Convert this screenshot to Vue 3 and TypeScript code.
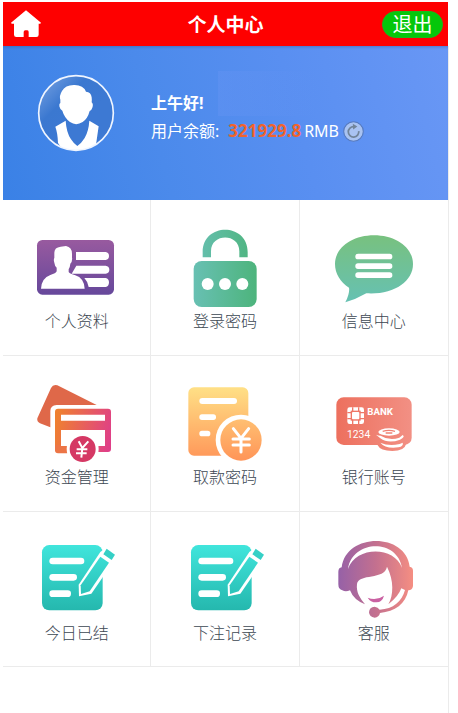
<script setup lang="ts">
import { ref } from 'vue'

interface MenuItem {
  icon: string
  label: string
  viewBox: string
}

const balance = ref<string>('321929.8')

const items: MenuItem[] = [
  { icon: 'profile', label: '个人资料', viewBox: '51 30 240 240' },
  { icon: 'lock', label: '登录密码', viewBox: '45 30 240 240' },
  { icon: 'message', label: '信息中心', viewBox: '42 30 240 240' },
  { icon: 'funds', label: '资金管理', viewBox: '51 33 240 240' },
  { icon: 'withdraw', label: '取款密码', viewBox: '45 33 240 240' },
  { icon: 'bank', label: '银行账号', viewBox: '42 33 240 240' },
  { icon: 'note', label: '今日已结', viewBox: '51 36 240 240' },
  { icon: 'note', label: '下注记录', viewBox: '48 36 240 240' },
  { icon: 'service', label: '客服', viewBox: '42 36 240 240' },
]
</script>

<template>
  <div class="page">
    <svg class="defs" aria-hidden="true">
      <defs>
        <linearGradient id="g-profile" x1="0" y1="0" x2="0" y2="1">
          <stop offset="0" stop-color="#985a9f" /><stop offset="1" stop-color="#66489b" />
        </linearGradient>
        <linearGradient id="g-lock" gradientUnits="userSpaceOnUse" x1="70" y1="0" x2="260" y2="0">
          <stop offset="0" stop-color="#68c0b3" /><stop offset="1" stop-color="#4db47c" />
        </linearGradient>
        <linearGradient id="g-message" x1="0" y1="0" x2="0" y2="1">
          <stop offset="0" stop-color="#78c17f" /><stop offset="1" stop-color="#66c1b3" />
        </linearGradient>
        <linearGradient id="g-funds" gradientUnits="userSpaceOnUse" x1="105" y1="150" x2="273" y2="190">
          <stop offset="0" stop-color="#ef8030" /><stop offset="1" stop-color="#df3f88" />
        </linearGradient>
        <linearGradient id="g-withdraw" gradientUnits="userSpaceOnUse" x1="0" y1="37" x2="0" y2="256">
          <stop offset="0" stop-color="#ffe086" /><stop offset="1" stop-color="#ff9558" />
        </linearGradient>
        <linearGradient id="g-bank" gradientUnits="userSpaceOnUse" x1="49" y1="0" x2="275" y2="0">
          <stop offset="0" stop-color="#ed705e" /><stop offset="1" stop-color="#f29084" />
        </linearGradient>
        <linearGradient id="g-note" gradientUnits="userSpaceOnUse" x1="0" y1="45" x2="0" y2="240">
          <stop offset="0" stop-color="#40e5dc" /><stop offset="1" stop-color="#25b8ae" />
        </linearGradient>
        <linearGradient id="g-service" gradientUnits="userSpaceOnUse" x1="55" y1="0" x2="279" y2="0">
          <stop offset="0" stop-color="#9661a7" /><stop offset="0.5" stop-color="#c3708f" /><stop offset="1" stop-color="#f58e82" />
        </linearGradient>
        <linearGradient id="g-avatar" x1="0" y1="0" x2="0.6" y2="0.6">
          <stop offset="0" stop-color="#7da6e4" /><stop offset="0.55" stop-color="#3b78d0" /><stop offset="1" stop-color="#3d79d3" />
        </linearGradient>
        <clipPath id="avatar-clip"><circle cx="228" cy="190" r="112" /></clipPath>
      </defs>
    </svg>

    <header class="bar">
      <a class="home" href="#" aria-label="首页">
        <svg viewBox="33 24 90 90" aria-hidden="true">
          <path fill="#fff" d="M78 28 L123 65 L121 68 H116 V101 Q116 108 109 108 H86 V93 Q86 88 82 88 H76 Q71 88 71 93 V108 H49 Q42 108 42 101 V68 H35 L33 65 Z" />
        </svg>
      </a>
      <h1 class="title">个人中心</h1>
      <button class="logout" type="button">退出</button>
    </header>

    <main class="content">
      <section class="banner">
        <svg class="avatar" viewBox="111 73 234 234" aria-hidden="true">
          <circle cx="228" cy="190" r="112" fill="url(#g-avatar)" />
          <g clip-path="url(#avatar-clip)" fill="#fff">
            <path d="M181 150 Q177 139 186 124 Q196 105 224 106 Q250 106 258 126 Q273 127 275 143 Q276 151 275 158 Q281 164 277 174 Q274 183 269 184 Q263 207 248 217 Q228 230 210 217 Q193 204 187 183 Q180 180 178 170 Q177 161 181 160 Z" />
            <path d="M197 213 Q199 248 213 269 Q222 283 232 289 Q244 281 254 265 Q266 244 268 213 L296 230 L288 285 L260 310 H195 L174 280 Q173 250 166 231 Z" />
          </g>
          <circle cx="228" cy="190" r="112" fill="none" stroke="#eff5ff" stroke-width="5" />
        </svg>
        <div class="info">
          <p class="line greeting">上午好!<span class="veil"></span></p>
          <p class="line">
            <span class="caption">用户余额:</span>
            <strong class="amount">{{ balance }}</strong>
            <span class="unit">RMB</span>
            <button class="refresh" type="button" aria-label="刷新">
              <svg viewBox="0 0 60 60" aria-hidden="true">
                <circle cx="30" cy="30" r="28" fill="#a9c3f2" stroke="#5478bd" stroke-width="3" />
                <path d="M31 16 A15 15 0 1 0 45 29" fill="none" stroke="#718499" stroke-width="5" />
                <path d="M28 8 L41 16 L29 24 Z" fill="#718499" />
              </svg>
            </button>
          </p>
        </div>
      </section>

      <nav class="grid">
        <a v-for="item in items" :key="item.label" class="cell" href="#">
          <svg class="icon" :viewBox="item.viewBox" aria-hidden="true">
            <g v-if="item.icon === 'profile'">
              <rect x="51" y="60" width="231" height="164" rx="16" fill="url(#g-profile)" />
              <g fill="#fff">
                <path d="M103 98 Q103 82 122 80 L138 78 Q156 82 156 101 V112 Q158 124 151 131 Q150 142 146 148 V156 Q150 162 166 166 Q192 174 194 206 H63 Q65 174 91 165 Q108 160 110 154 V143 Q104 137 103 128 Q100 120 103 113 Z" />
                <path d="M168 96 H257 Q267 98 267 108 Q267 118 257 120 H168 Z" />
                <path d="M169 137 H257 Q268 139 268 149 Q268 159 257 161 H155 Z" />
                <path d="M193 174 H257 Q267 176 267 187 Q267 199 257 201 H206 Q203 184 193 174 Z" />
              </g>
            </g>

            <g v-else-if="item.icon === 'lock'">
              <path d="M98 112 V96 C98 7 233 7 233 96 V112 H208 V94 C208 39 123 39 123 94 V112 Z" fill="url(#g-lock)" />
              <rect x="71" y="123" width="189" height="138" rx="24" fill="url(#g-lock)" />
              <g fill="#fff">
                <circle cx="113" cy="192" r="18" /><circle cx="165" cy="192" r="18" /><circle cx="217" cy="192" r="18" />
              </g>
            </g>

            <g v-else-if="item.icon === 'message'">
              <path d="M162 46 C228 46 279 83 279 132 C279 186 220 225 139 220 Q108 238 76 247 Q90 220 87 203 C61 187 45 160 45 132 C45 83 97 46 162 46 Z" fill="url(#g-message)" />
              <g fill="#fff">
                <rect x="106" y="101" width="111" height="17" rx="8" /><rect x="106" y="130" width="111" height="17" rx="8" /><rect x="106" y="157" width="111" height="17" rx="8" />
              </g>
            </g>

            <g v-else-if="item.icon === 'funds'">
              <path d="M91 157 L60 145 Q50 140 52 130 L93 39 Q99 27 112 31 L230 90 H110 Q91 91 91 108 Z" fill="#df6849" />
              <rect x="105" y="101" width="168" height="130" rx="9" fill="url(#g-funds)" />
              <path d="M105 210 V226 Q105 235 114 235 H142 V210 Z" fill="#ec7546" />
              <path d="M123 119 H255 V137 H123 Z M123 165 H255 V213 H123 Z" fill="#fff" />
              <circle cx="188" cy="222" r="48" fill="#fff" />
              <circle cx="188" cy="222" r="39" fill="#d53864" />
              <path d="M176 199 L187 219 L205 199 M187 219 L184 248 M170 223 H202 M168 235 H200" fill="none" stroke="#fff" stroke-width="6" />
            </g>

            <g v-else-if="item.icon === 'withdraw'">
              <rect x="55" y="37" width="180" height="205" rx="17" fill="url(#g-withdraw)" />
              <circle cx="213" cy="195" r="76" fill="#fff" />
              <circle cx="213" cy="195" r="62" fill="url(#g-withdraw)" />
              <g fill="#fff">
                <rect x="88" y="69" width="113" height="18" rx="9" /><rect x="88" y="118" width="50" height="17" rx="8" /><rect x="88" y="167" width="33" height="17" rx="8" />
              </g>
              <path d="M190 161 L213 190 L236 161 M213 190 V231 M189 192 H238 M189 210 H238" fill="none" stroke="#fff" stroke-width="9" stroke-linecap="round" />
            </g>

            <g v-else-if="item.icon === 'bank'">
              <rect x="49" y="67" width="226" height="143" rx="22" fill="url(#g-bank)" />
              <path d="M169 176 Q179 158 210 160 Q258 162 258 186 V208 Q254 228 217 228 Q181 228 173 211 Z" fill="url(#g-bank)" />
              <rect x="82" y="97" width="50" height="50" rx="7" fill="#fff" />
              <path d="M82 113 H132 M82 131 H132 M98 97 V147 M116 97 V147" stroke="#ef7767" stroke-width="4" />
              <rect x="92" y="107" width="30" height="30" fill="#ef7767" />
              <rect x="96" y="111" width="22" height="22" rx="3" fill="#fff" />
              <text x="142" y="121" class="bank-name">BANK</text>
              <text x="81" y="188" class="bank-number">1234</text>
              <ellipse cx="207" cy="171" rx="32" ry="11" fill="#fff" />
              <path d="M188 169 Q207 163 225 169 M197 174 H217" fill="none" stroke="#f08173" stroke-width="4" />
              <path d="M168 179 Q175 182 182 182 Q209 199 238 188 L248 180 Q257 185 240 194 Q205 207 181 190 Z" fill="#fff" />
              <path d="M181 203 Q206 214 239 207 L248 203 Q252 213 235 217 Q196 222 181 203 Z" fill="#fff" />
            </g>

            <g v-else-if="item.icon === 'note'">
              <rect x="66" y="45" width="182" height="196" rx="22" fill="url(#g-note)" />
              <g fill="#fff">
                <rect x="88" y="83" width="105" height="20" rx="10" /><rect x="88" y="132" width="83" height="20" rx="10" /><rect x="88" y="181" width="65" height="20" rx="10" />
              </g>
              <path d="M241 66 L262 50 L294 73 L279 97 L214 191 L177 199 L176 164 Z" fill="#fff" />
              <path d="M241 80 L267 98 L209 184 L183 192 L182 166 Z" fill="url(#g-note)" />
              <path d="M260 56 L285 74 L275 90 L250 73 Z" fill="#35d0c6" />
            </g>

            <g v-else>
              <path d="M65 112 C78 7 258 7 269 110 Q279 112 279 122 V168 Q277 181 265 181 C257 222 225 245 180 249 Q177 262 164 263 Q148 262 147 247 Q148 231 164 230 Q174 231 179 239 C220 237 246 214 255 180 L244 175 Q235 200 205 223 C221 196 222 151 201 110 C194 151 116 129 111 162 C108 186 119 203 135 223 Q101 210 90 181 Q77 187 67 181 Q55 178 55 163 V126 Q55 113 65 112 Z" fill="url(#g-service)" />
              <path d="M84 117 C97 29 232 25 246 114 C223 48 108 48 84 117 Z" fill="#fff" />
              <path d="M143 203 Q168 214 192 197 Q187 216 169 217 Q151 217 143 203 Z" fill="#ca61a2" />
            </g>
          </svg>
          <span class="label">{{ item.label }}</span>
        </a>
      </nav>
    </main>
  </div>
</template>

<style>
body {
  margin: 0;
  background: #fff;
}
</style>

<style scoped>
.page {
  box-sizing: border-box;
  min-height: 100vh;
  display: flex;
  flex-direction: column;
  padding: 2px 9px 0 3px;
  font-family: "Noto Sans", "Noto Sans CJK SC", sans-serif;
  font-size: 16px;
}

.defs {
  position: absolute;
  width: 0;
  height: 0;
}

.bar {
  display: grid;
  grid-template-columns: 1fr auto 1fr;
  align-items: center;
  height: 44px;
  margin-right: 1px;
  padding: 0 5px;
  box-sizing: border-box;
  background: #fe0000;
}

.home {
  justify-self: start;
  padding-left: 3px;
}

.home svg {
  display: block;
  width: 30px;
  height: 30px;
}

.title {
  margin: 0;
  color: #fff;
  font-family: "Noto Sans CJK SC", sans-serif;
  font-size: 19px;
  line-height: 28px;
  font-weight: 700;
}

.logout {
  justify-self: end;
  width: 61px;
  height: 27px;
  padding: 0;
  border: 1px solid #18b81c;
  border-radius: 14px;
  background: #05c70a;
  color: #fff;
  font-family: "Noto Sans CJK SC", sans-serif;
  font-size: 20px;
  line-height: 24px;
}

.content {
  flex: 1;
  border-right: 1px solid #ebebeb;
}

.banner {
  display: flex;
  align-items: flex-start;
  gap: 36px;
  box-sizing: border-box;
  min-height: 154px;
  padding: 28px 16px 20px 34px;
  background: linear-gradient(75deg, #3a81e6 0%, #4b8aeb 35%, #598ff1 65%, #6997f5 100%);
  box-shadow: inset 0 3px 3px -2px rgba(50, 80, 140, 0.4);
}

.avatar {
  flex: none;
  width: 78px;
  height: 78px;
}

.info {
  padding-top: 15px;
  color: #fff;
}

.line {
  display: flex;
  align-items: center;
  height: 28px;
  margin: 0;
  line-height: 28px;
  white-space: nowrap;
}

.greeting {
  position: relative;
  font-weight: 700;
}

.veil {
  position: absolute;
  left: 67px;
  bottom: 1px;
  width: 100px;
  height: 45px;
  background: linear-gradient(90deg, rgba(108, 150, 245, 0.3), rgba(108, 150, 245, 0));
}

.caption {
  margin-right: 9px;
}

.amount {
  margin-right: 3px;
  color: #f0642d;
  font-size: 17px;
}

.unit {
  margin-right: 4px;
}

.refresh {
  padding: 0;
  border: 0;
  background: none;
}

.refresh svg {
  display: block;
  width: 21px;
  height: 21px;
}

.grid {
  display: grid;
  grid-template-columns: repeat(3, 1fr);
  grid-template-rows: 156px 156px 155px;
}

.cell {
  display: flex;
  flex-direction: column;
  align-items: center;
  box-sizing: border-box;
  padding-top: 30px;
  border-right: 1px solid #ebebeb;
  border-bottom: 1px solid #ebebeb;
  color: #3c4752;
  text-decoration: none;
}

.cell:nth-child(3n) {
  border-right: 0;
}

.icon {
  width: 80px;
  height: 80px;
  overflow: visible;
}

.label {
  font-family: "Noto Sans CJK SC", sans-serif;
  font-weight: 300;
  line-height: 20px;
}

.bank-name {
  fill: #fff;
  font-family: Roboto, sans-serif;
  font-size: 29px;
  font-weight: 700;
}

.bank-number {
  fill: #fff;
  font-family: Roboto, sans-serif;
  font-size: 31px;
}
</style>
